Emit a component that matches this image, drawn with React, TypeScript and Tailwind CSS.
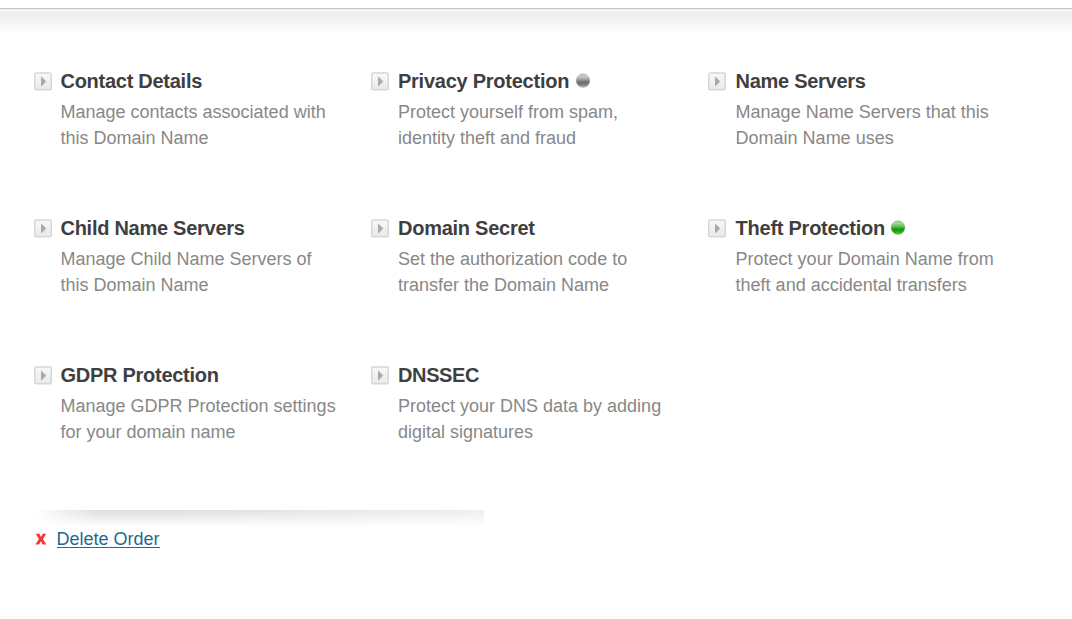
type Status = 'off' | 'on';

interface Item {
  title: string;
  lines: [string, string];
  spacing: string;
  status?: Status;
}

const items: Item[] = [
  { title: 'Contact Details', lines: ['Manage contacts associated with', 'this Domain Name'], spacing: 'tracking-[-0.27px]' },
  { title: 'Privacy Protection', lines: ['Protect yourself from spam,', 'identity theft and fraud'], spacing: 'tracking-[-0.25px]', status: 'off' },
  { title: 'Name Servers', lines: ['Manage Name Servers that this', 'Domain Name uses'], spacing: 'tracking-[-0.29px]' },
  { title: 'Child Name Servers', lines: ['Manage Child Name Servers of', 'this Domain Name'], spacing: 'tracking-[-0.27px]' },
  { title: 'Domain Secret', lines: ['Set the authorization code to', 'transfer the Domain Name'], spacing: 'tracking-[-0.26px]' },
  { title: 'Theft Protection', lines: ['Protect your Domain Name from', 'theft and accidental transfers'], spacing: 'tracking-[-0.25px]', status: 'on' },
  { title: 'GDPR Protection', lines: ['Manage GDPR Protection settings', 'for your domain name'], spacing: 'tracking-[-0.27px]' },
  { title: 'DNSSEC', lines: ['Protect your DNS data by adding', 'digital signatures'], spacing: 'tracking-[-0.38px]' },
];

const gaps = ['gap-[8.5px]', 'gap-[9px]', 'gap-[9.6px]'];

function Arrow() {
  return (
    <svg width="18" height="19" viewBox="0 0 18 19" className="mt-[5px] shrink-0">
      <defs>
        <linearGradient id="button-fill" x1="0" y1="0" x2="0" y2="1">
          <stop offset="0" stopColor="#f9f9f9" />
          <stop offset="1" stopColor="#e9e9e9" />
        </linearGradient>
        <linearGradient id="arrow-fill" x1="0" y1="0" x2="1" y2="0">
          <stop offset="0" stopColor="#a0a0a0" />
          <stop offset="1" stopColor="#bababa" />
        </linearGradient>
      </defs>
      <rect x="0.75" y="1" width="16.5" height="16.8" rx="1.5" fill="url(#button-fill)" stroke="#d6d6d6" strokeWidth="1.5" />
      <path d="M7.1 4.4L12.5 9.4L7.1 14.4Z" fill="url(#arrow-fill)" />
    </svg>
  );
}

function Dot({ status }: { status: Status }) {
  const on = status === 'on';
  return (
    <svg width="16" height="16" viewBox="0 0 16 16" className="mb-px ml-[5.5px]">
      <defs>
        <linearGradient id={`ball-${status}`} x1="0" y1="0" x2="0" y2="1">
          <stop offset="0" stopColor={on ? '#8ccb86' : '#b8b8b8'} />
          <stop offset="0.18" stopColor={on ? '#a0dc97' : '#cbcbcb'} />
          <stop offset="0.46" stopColor={on ? '#55b94b' : '#989898'} />
          <stop offset="0.6" stopColor={on ? '#17990e' : '#6c6c6c'} />
          <stop offset="0.78" stopColor={on ? '#1fa914' : '#7c7c7c'} />
          <stop offset="1" stopColor={on ? '#55cc49' : '#b5b5b5'} />
        </linearGradient>
      </defs>
      <circle cx="8" cy="7.6" r="6.9" fill={`url(#ball-${status})`} stroke={on ? '#5da657' : '#aaa'} strokeOpacity=".4" strokeWidth=".8" />
    </svg>
  );
}

export default function App() {
  return (
    <main className="h-[619px] overflow-hidden bg-white font-['Liberation_Sans',Arial,sans-serif]">
      <div className="h-[9px] border-b border-[#c8c8c8]" />
      <div className="h-px bg-[#e8e8e8]" />
      <div className="h-px bg-white" />
      <div className="h-[24px] bg-linear-to-b from-[#efefef] from-20% to-white to-95%" />
      <div className="mt-[32px] ml-[34px] grid auto-rows-[147px] grid-cols-[337px_337px_337px]">
        {items.map((item, i) => (
          <section key={item.title} className={`flex items-start ${gaps[i % 3]}`}>
            <Arrow />
            <div className="whitespace-nowrap">
              <h2 className={`flex h-[28px] items-center text-[20px] font-bold text-[#3f3f3f] ${item.spacing}`}>
                {item.title}
                {item.status && <Dot status={item.status} />}
              </h2>
              <p className="mt-[4px] text-[18px] leading-[26px] text-[#888]">
                {item.lines[0]}
                <br />
                {item.lines[1]}
              </p>
            </div>
          </section>
        ))}
      </div>
      <div className="mt-[2px] ml-[34px] h-[17px] w-[450px] bg-linear-to-b from-[#dedede] to-white">
        <div className="h-full bg-linear-[to_right,#fff_0%,#ffffff00_14%,#ffffff00_30%,#ffffff80_100%]" />
      </div>
      <div className="ml-[35px] flex h-[24px] items-start text-[18px]">
        <svg width="12" height="13" viewBox="0 0 12 13" className="mt-[6px] mr-[9.5px]">
          <path d="M0.8 0.8H4.3L6 3.9L7.8 0.8H11.2L8 6L11.3 11.6H7.8L5.9 8.3L4 11.6H0.5L3.9 6Z" fill="#f8352f" />
        </svg>
        <a className="mt-px h-[20px] border-b border-[#1c6a8d] leading-[23px] text-[#1c6a8d]">Delete Order</a>
      </div>
    </main>
  );
}
